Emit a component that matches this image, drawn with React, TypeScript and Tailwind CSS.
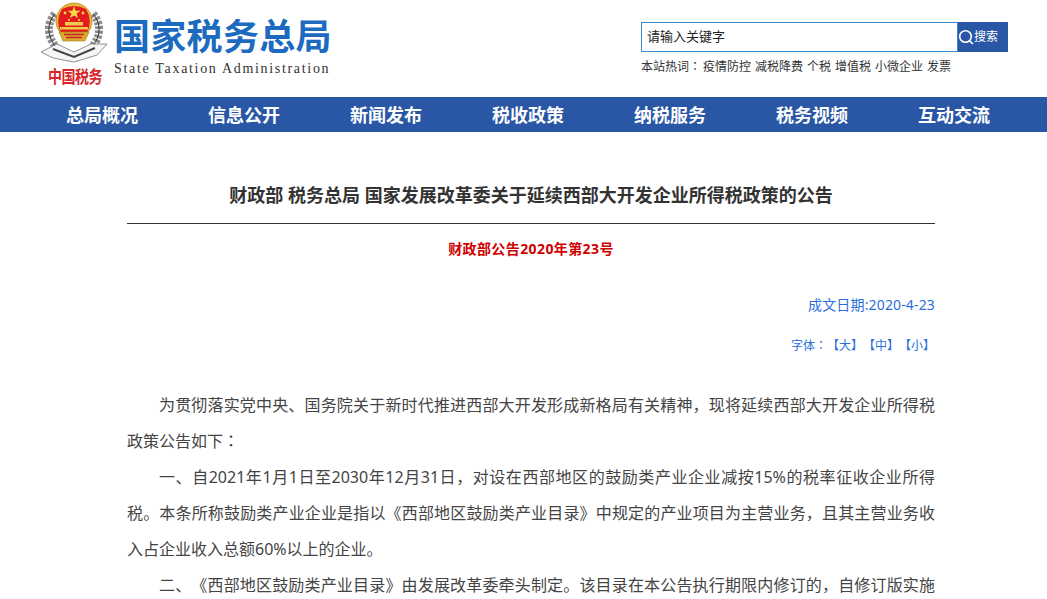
const FONT = "font-['Noto_Sans','Noto_Sans_CJK_SC',sans-serif]";

function Emblem() {
  return (
    <svg width="68" height="62" viewBox="0 0 68 62" className="block">
      <path d="M14 12C5 22 6 36 17 47" fill="none" stroke="#8d8d8d" strokeWidth="8" strokeDasharray="3 1.5" />
      <path d="M52 12C61 22 60 36 49 47" fill="none" stroke="#8d8d8d" strokeWidth="8" strokeDasharray="3 1.5" />
      <path d="M14 12C5 22 6 36 17 47" fill="none" stroke="#2f2f2f" strokeWidth="1" />
      <path d="M52 12C61 22 60 36 49 47" fill="none" stroke="#2f2f2f" strokeWidth="1" />
      <path d="M0 50L16 42L33 50L50 42L66 42L56 53L33 60L12 56Z" fill="#f6f6f6" stroke="#777" strokeWidth="0.8" />
      <path d="M12 47L33 55L54 46" fill="none" stroke="#444" strokeWidth="2" />
      <circle cx="33" cy="19" r="18" fill="#e9bb3c" stroke="#b98a1c" strokeWidth="0.8" />
      <path d="M21 7Q33 1 45 7Q52 18 46 31H20Q14 18 21 7Z" fill="#e21c1c" />
      <polygon points="33,4 34.6,8.8 39.5,8.8 35.6,11.6 37,16 33,13.4 29,16 30.4,11.6 26.5,8.8 31.4,8.8" fill="#f8d948" />
      <circle cx="24" cy="11" r="1.4" fill="#f8d948" />
      <circle cx="42" cy="11" r="1.4" fill="#f8d948" />
      <circle cx="28" cy="18" r="1" fill="#f8d948" />
      <circle cx="38" cy="18" r="1" fill="#f8d948" />
      <rect x="24" y="20" width="18" height="3.5" fill="#f0c94a" />
      <rect x="19" y="25" width="28" height="2.5" fill="#f0c94a" />
      <path d="M18 30H48L44 39H22Z" fill="#d9a92c" stroke="#a87d18" strokeWidth="0.6" />
      <path d="M23 32.5H43M25 35.5H41" stroke="#c9242a" strokeWidth="1.3" />
    </svg>
  );
}

const nav = ["总局概况", "信息公开", "新闻发布", "税收政策", "纳税服务", "税务视频", "互动交流"];
const hot = ["疫情防控", "减税降费", "个税", "增值税", "小微企业", "发票"];

function Colon() {
  return <span className="font-['Noto_Sans_CJK_TC',sans-serif] leading-none">：</span>;
}

export default function App() {
  return (
    <div className={`${FONT} h-[599px] overflow-hidden bg-white [text-spacing-trim:space-all]`}>
      <header className="flex h-[97px] justify-between pl-[40px] pr-[39px]">
        <div className="flex">
          <div className="flex w-[70px] flex-col items-center pt-[2px]">
            <Emblem />
            <span className="mt-[3px] scale-y-125 text-[14px] font-bold leading-[19px] tracking-[-0.5px] text-[#d9252a]">
              中国税务
            </span>
          </div>
          <div className="ml-[4px] flex flex-col pt-[19px]">
            <span className="h-[42px] text-[36px] font-bold leading-[36px] tracking-[0.3px] text-[#1c6bbf]">国家税务总局</span>
            <span className="font-['Liberation_Serif',serif] text-[14px] leading-[16px] tracking-[1.68px] text-[#333]">
              State Taxation Administration
            </span>
          </div>
        </div>
        <div className="flex w-[367px] flex-col pt-[22px]">
          <div className="flex h-[30px]">
            <div className="flex h-full w-[317px] items-center border border-[#3a8ad0] pl-[5px] text-[13px] text-[#222]">
              请输入关键字
            </div>
            <div className="flex h-full w-[50px] items-center bg-[#2a57a5] text-[12px] text-white">
              <svg width="16" height="16" viewBox="0 0 16 16" className="shrink-0">
                <circle cx="7.5" cy="7.5" r="5.8" fill="none" stroke="#fff" strokeWidth="1.6" />
                <path d="M11.5 11.8L15 15" stroke="#fff" strokeWidth="1.6" />
              </svg>
              <span>搜索</span>
            </div>
          </div>
          <div className="mt-[7px] flex gap-[4px] whitespace-nowrap text-[12px] leading-[16px] text-[#333]">
            <span className="w-[58px]">本站热词<Colon /></span>
            {hot.map((h) => (
              <span key={h}>{h}</span>
            ))}
          </div>
        </div>
      </header>

      <nav className="grid h-[35px] grid-cols-[repeat(7,142px)] bg-[#2a57a5] pl-[31px]">
        {nav.map((n) => (
          <span key={n} className="text-center text-[18px] font-bold leading-[36px] text-white">
            {n}
          </span>
        ))}
      </nav>

      <main className="mx-[127px] w-[808px]">
        <h1 className="mt-[50px] text-center text-[18px] font-bold leading-[26px] text-[#333]">
          财政部 税务总局 国家发展改革委关于延续西部大开发企业所得税政策的公告
        </h1>
        <div className="mt-[15px] border-t border-[#333]" />
        <p className="mt-[16px] text-center text-[14px] font-bold leading-[18px] tracking-[0.4px] text-[#d00000]">
          财政部公告2020年第23号
        </p>
        <p className="mt-[37px] text-right text-[14px] leading-[20px] tracking-[0.15px] text-[#2a6fdb]">成文日期:2020-4-23</p>
        <p className="mt-[22px] text-right text-[12px] leading-[18px] text-[#2a6fdb]">字体<Colon />【大】【中】【小】</p>
        <div className="mt-[32px] text-justify text-[16px] leading-[36px] text-[#444]">
          <p className="indent-[32px]">
            为贯彻落实党中央、国务院关于新时代推进西部大开发形成新格局有关精神，现将延续西部大开发企业所得税政策公告如下<Colon />
          </p>
          <p className="indent-[32px]">
            一、自2021年1月1日至2030年12月31日，对设在西部地区的鼓励类产业企业减按15%的税率征收企业所得税。本条所称鼓励类产业企业是指以《西部地区鼓励类产业目录》中规定的产业项目为主营业务，且其主营业务收入占企业收入总额60%以上的企业。
          </p>
          <p className="indent-[32px]">
            二、《西部地区鼓励类产业目录》由发展改革委牵头制定。该目录在本公告执行期限内修订的，自修订版实施之日起按新版本执行。
          </p>
        </div>
      </main>
    </div>
  );
}
